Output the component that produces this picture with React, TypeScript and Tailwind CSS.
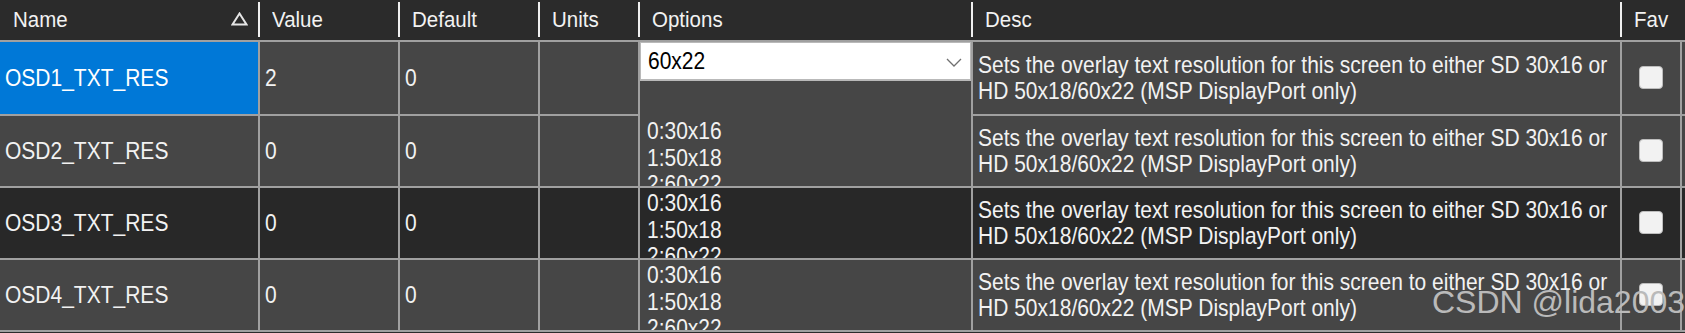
import React from 'react'

const FONT = "font-['Liberation_Sans',Arial,sans-serif]"

const rows = [
  { name: 'OSD1_TXT_RES', value: '2', def: '0', dark: false, selected: true, editing: true },
  { name: 'OSD2_TXT_RES', value: '0', def: '0', dark: false, selected: false, editing: false },
  { name: 'OSD3_TXT_RES', value: '0', def: '0', dark: true, selected: false, editing: false },
  { name: 'OSD4_TXT_RES', value: '0', def: '0', dark: false, selected: false, editing: false },
]

// the source UI text is a little taller than Arial, stretch it vertically
const TALL = 'inline-block scale-y-[1.17]'

function Bar() {
  return <div className="w-[2px] h-[35px] bg-[#f0f0f0] self-start mt-[2px] shrink-0" />
}

function HeadCell({ label, w, last }: { label: string; w: string; last?: boolean }) {
  return (
    <div className={`${w} flex items-center shrink-0`}>
      <span className="flex-1 pl-[12px] pb-[1px]">
        <span className="inline-block scale-y-[1.09]">{label}</span>
      </span>
      {!last && <Bar />}
    </div>
  )
}

function Combo() {
  return (
    <div className="h-[39px] bg-white border border-b-2 border-[#b9b9b9] flex items-center pl-[7px] pr-[8px] text-black">
      <span className="flex-1">
        <span className={TALL}>60x22</span>
      </span>
      <svg width="16" height="9" viewBox="0 0 16 9" className="mt-[2px]">
        <polyline points="1,1 8,8 15,1" fill="none" stroke="#707070" strokeWidth="1.3" />
      </svg>
    </div>
  )
}

export default function App() {
  return (
    <div className={`w-[1685px] h-[333px] bg-[#2b2b2b] text-[#f2f2f2] overflow-hidden relative ${FONT}`}>
      {/* header */}
      <div className="flex h-[42px] border-b-2 border-[#a0a0a0] bg-[#2b2b2b] text-[20.5px]">
        <div className="w-[260px] flex items-center shrink-0">
          <span className="flex-1 pl-[13px] pb-[1px]">
            <span className="inline-block scale-y-[1.09]">Name</span>
          </span>
          <svg width="17" height="14" viewBox="0 0 17 14" className="mr-[10px] mb-[3px]">
            <polygon points="8.5,1.5 1.5,12.5 15.5,12.5" fill="none" stroke="#e6e6e6" strokeWidth="2" />
          </svg>
          <Bar />
        </div>
        <HeadCell label="Value" w="w-[140px]" />
        <HeadCell label="Default" w="w-[140px]" />
        <HeadCell label="Units" w="w-[100px]" />
        <HeadCell label="Options" w="w-[333px]" />
        <HeadCell label="Desc" w="w-[649px]" />
        <HeadCell label="Fav" w="w-[60px]" last />
        <div className="flex-1" />
      </div>

      {rows.map((r, i) => {
        const h = i === 0 ? 'h-[74px]' : 'h-[72px]'
        const bg = r.dark ? 'bg-[#282828]' : 'bg-[#464646]'
        const cell = `${h} shrink-0 border-r-2 border-b-2 border-[#a0a0a0]`
        return (
          <div key={r.name} className={`flex text-[21px] ${bg}`}>
            <div className={`${cell} w-[260px] flex items-center pl-[5px] ${r.selected ? 'bg-[#0078d7] text-white' : ''}`}>
              <span className={TALL}>{r.name}</span>
            </div>
            <div className={`${cell} w-[140px] flex items-center pl-[5px]`}>
              <span className={TALL}>{r.value}</span>
            </div>
            <div className={`${cell} w-[140px] flex items-center pl-[5px]`}>
              <span className={TALL}>{r.def}</span>
            </div>
            <div className={`${cell} w-[100px]`} />
            {r.editing ? (
              <div className={`${h} shrink-0 w-[333px] border-r-2 border-[#a0a0a0]`}>
                <Combo />
              </div>
            ) : (
              <div className={`${cell} w-[333px] pl-[7px] pt-[2px] overflow-hidden`}>
                <div className="origin-top scale-y-[1.17] leading-[22.6px]">
                  <div>0:30x16</div>
                  <div>1:50x18</div>
                  <div>2:60x22</div>
                </div>
              </div>
            )}
            <div className={`${cell} w-[649px] flex flex-col justify-center pl-[5px] whitespace-nowrap`}>
              <div className="scale-y-[1.17] leading-[22.2px]">
                <div>Sets the overlay text resolution for this screen to either SD 30x16 or</div>
                <div>HD 50x18/60x22 (MSP DisplayPort only)</div>
              </div>
            </div>
            <div className={`${cell} w-[60px] flex items-center justify-center`}>
              <div className="w-[24px] h-[23px] rounded-[4px] bg-[#f2f2f2] border border-[#bdbdbd] -mt-[1px]" />
            </div>
            <div className={`${h} flex-1 border-b-2 border-[#a0a0a0]`} />
          </div>
        )
      })}

      <div className="absolute left-[1432px] top-[286px] text-[32px] leading-[32px] text-[#bababa] whitespace-nowrap pointer-events-none">
        CSDN @lida2003
      </div>
    </div>
  )
}
